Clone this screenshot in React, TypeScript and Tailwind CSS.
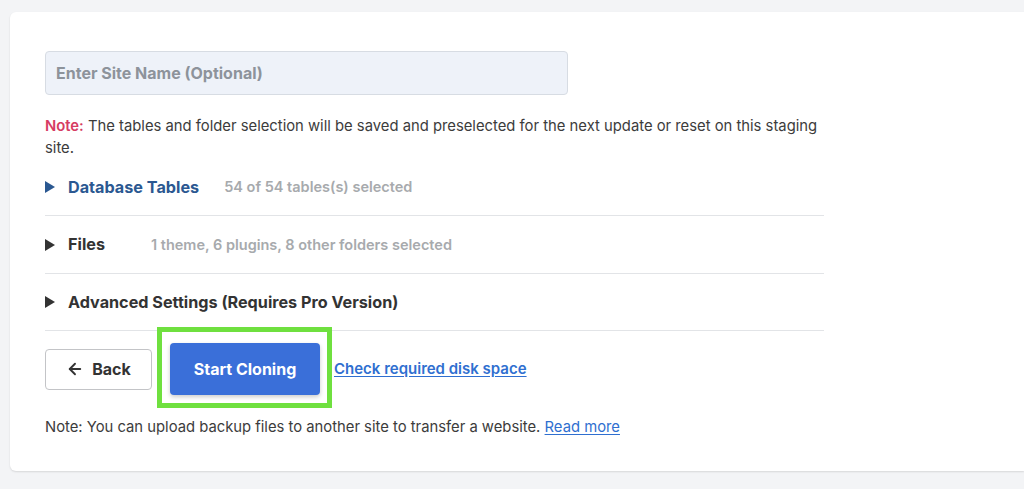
import { ArrowLeft } from "lucide-react";

function Triangle({ color }: { color: string }) {
    return (
        <svg width="10" height="12" viewBox="0 0 10 12" className="shrink-0">
            <path d="M0 0 L10 6 L0 12 Z" fill={color} />
        </svg>
    );
}

function SectionRow({ title, detail, titleClass, gap, triangle, height }: { title: string; detail?: string; titleClass: string; gap: string; triangle: string; height: string }) {
    return (
        <div className={`flex ${height} items-center border-b border-[#e2e4e7]`}>
            <Triangle color={triangle} />
            <span className={`ml-[13px] text-[16.2px] font-bold ${titleClass}`}>{title}</span>
            {detail && <span className={`${gap} text-[14.5px] font-semibold text-[#a7aaad]`}>{detail}</span>}
        </div>
    );
}

export default function App() {
    return (
        <div className="min-h-[489px] bg-[#f3f4f6] pl-[10px] pt-[12px] pb-[18px]" style={{ fontFamily: "Inter, 'Noto Sans', sans-serif" }}>
            <div className="rounded-l-md bg-white pl-[35px] pt-[39px] pb-[33px] shadow-[0_1px_2px_rgba(0,0,0,0.12)]">
                <div className="w-[790px]">
                    {/* Site name */}
                    <div className="flex h-[44px] w-[523px] items-center rounded-[4px] border border-[#d7dce3] bg-[#eef2f9] px-[10px]">
                        <span className="text-[16px] font-bold text-[#8d939b]">Enter Site Name (Optional)</span>
                    </div>

                    <p className="mt-[20px] w-[785px] text-[14.8px] leading-[22px] text-[#3c3c3c]">
                        <span className="font-semibold text-[#d63c63]">Note:</span> The tables and folder selection will be saved and preselected for the next update or reset on this staging site.
                    </p>

                    {/* Sections */}
                    <div className="w-[779px]">
                        <SectionRow title="Database Tables" detail="54 of 54 tables(s) selected" titleClass="text-[#2b5891]" gap="ml-[25px]" triangle="#2b5891" height="h-[57px]" />
                        <SectionRow title="Files" detail="1 theme, 6 plugins, 8 other folders selected" titleClass="text-[#333]" gap="ml-[46px]" triangle="#333" height="h-[58px]" />
                        <SectionRow title="Advanced Settings (Requires Pro Version)" titleClass="text-[#333]" gap="" triangle="#333" height="h-[57px]" />
                    </div>

                    {/* Actions */}
                    <div className="mt-[12px] flex items-center">
                        <button className="flex h-[41px] w-[107px] items-center justify-center gap-[8px] rounded-[4px] border border-[#c3c4c7] bg-white text-[16px] font-bold text-[#333]">
                            <ArrowLeft size={18} strokeWidth={2.5} />
                            Back
                        </button>
                        <div className="relative ml-[18px]">
                            <button className="h-[52px] w-[150px] rounded-[4px] bg-[#3a6fd9] text-[16px] font-bold text-white shadow-[0_2px_4px_rgba(0,0,0,0.2)]">
                                Start Cloning
                            </button>
                            <div className="pointer-events-none absolute -top-[16px] -bottom-[13px] -left-[13px] -right-[12px] border-[5px] border-[#6fe03f]" />
                        </div>
                        <a href="#" className="ml-[14px] text-[15px] font-semibold text-[#2f6fd0] underline underline-offset-2">
                            Check required disk space
                        </a>
                    </div>

                    <p className="mt-[21px] text-[14.8px] leading-[22px] text-[#3c3c3c]">
                        Note: You can upload backup files to another site to transfer a website.{" "}
                        <a href="#" className="text-[#2f6fd0] underline underline-offset-2">Read more</a>
                    </p>
                </div>
            </div>
        </div>
    );
}
